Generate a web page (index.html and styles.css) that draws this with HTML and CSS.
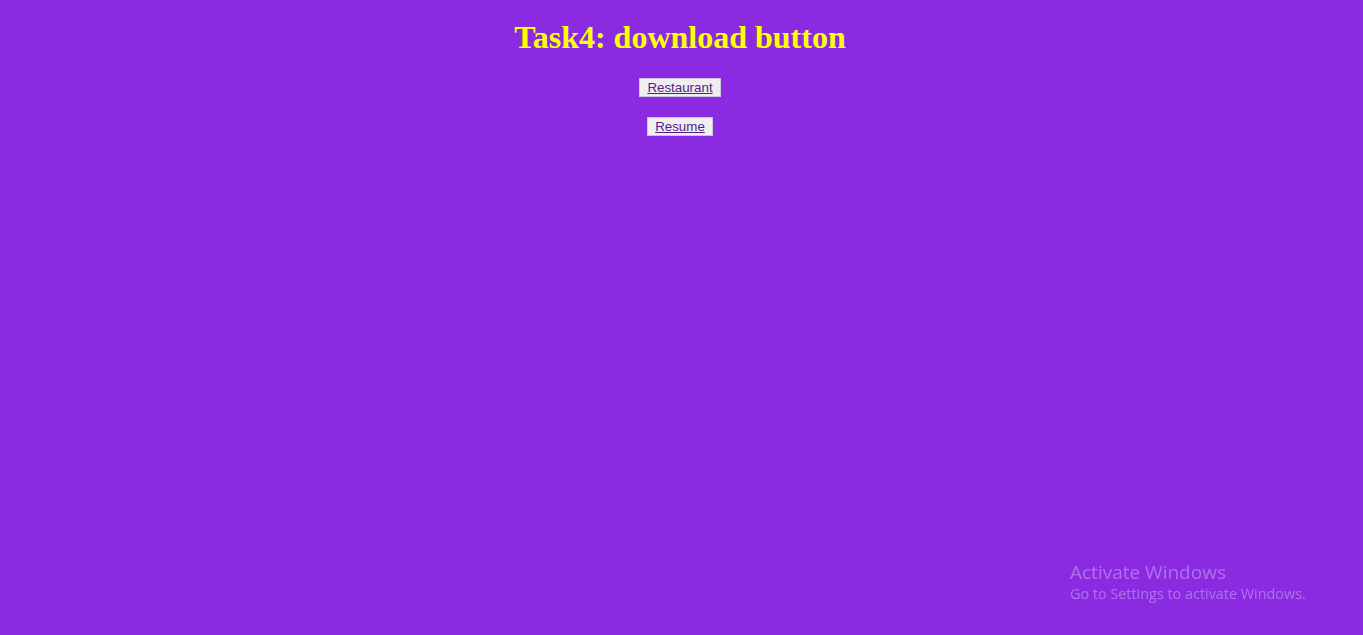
FILE: index.html
```html
<!DOCTYPE html>
<html>
<head>
<meta charset="utf-8">
<title>Task4</title>
<link rel="stylesheet" href="styles.css">
</head>
<body>
<h1 class="title">Task4: download button</h1>
<p class="row"><button class="btn"><a class="link" href="#">Restaurant</a></button></p>
<p class="row"><button class="btn"><a class="link" href="#">Resume</a></button></p>
<div class="watermark">
  <div class="wm-title">Activate Windows</div>
  <div class="wm-sub">Go to Settings to activate Windows.</div>
</div>
</body>
</html>
```
FILE: styles.css
```css
html, body {
  background: #8a2be2;
}
body {
  margin: 8px 10px 8px 7px;
  font-family: "Liberation Serif", "Times New Roman", serif;
  text-align: center;
}
.title {
  color: #ffff00;
  font-size: 32px;
  font-weight: bold;
  margin: 11px 0 18px;
}
.row {
  margin: 16px 0;
  line-height: 23px;
}
.btn {
  font-family: "Liberation Sans", Arial, sans-serif;
  font-size: 13.333px;
  line-height: 15px;
  background: #efefef;
  border: 1px solid #c9c4d6;
  border-radius: 0;
  padding: 1px 7px;
  color: #000;
  vertical-align: middle;
}
.link {
  color: #551a8b;
  text-decoration: underline;
}
.watermark {
  position: fixed;
  left: 1070px;
  top: 560px;
  text-align: left;
  color: rgba(255, 255, 255, 0.32);
  font-family: "Open Sans", "Noto Sans", sans-serif;
}
.wm-title {
  font-size: 19px;
  line-height: 24px;
}
.wm-sub {
  font-size: 14.4px;
  line-height: 20px;
}
```
